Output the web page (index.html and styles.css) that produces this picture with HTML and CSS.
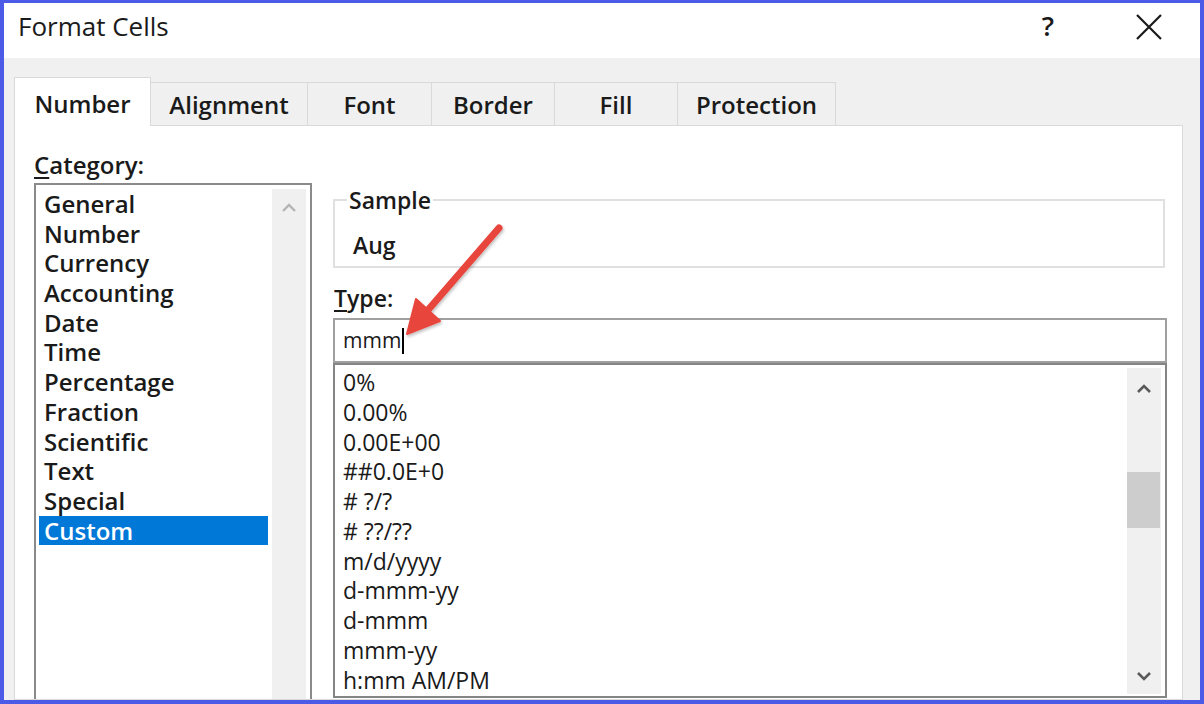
FILE: index.html
```html
<!DOCTYPE html>
<html>
<head>
<meta charset="utf-8">
<title>Format Cells</title>
<link rel="stylesheet" href="styles.css">
</head>
<body>
<div class="window">
  <div class="titlebar">
    <div class="title">Format Cells</div>
    <div class="tb-buttons">
      <div class="tb-help">?</div>
      <div class="tb-close">
        <svg width="26" height="26" viewBox="0 0 26 26"><path d="M1 1 L25 25 M25 1 L1 25" stroke="#1a1a1a" stroke-width="2.2" fill="none"/></svg>
      </div>
    </div>
  </div>
  <div class="client">
    <div class="tabs">
      <div class="tab active w-number">Number</div>
      <div class="tab w-align">Alignment</div>
      <div class="tab w-font">Font</div>
      <div class="tab w-border">Border</div>
      <div class="tab w-fill">Fill</div>
      <div class="tab w-prot">Protection</div>
      <div class="tab-fill"></div>
    </div>
    <div class="panel">
      <div class="col-left">
        <div class="label cat-label"><u>C</u>ategory:</div>
        <div class="listbox cat">
          <ul class="items cat-items">
            <li>General</li>
            <li>Number</li>
            <li>Currency</li>
            <li>Accounting</li>
            <li>Date</li>
            <li>Time</li>
            <li>Percentage</li>
            <li>Fraction</li>
            <li>Scientific</li>
            <li>Text</li>
            <li>Special</li>
            <li class="selected">Custom</li>
          </ul>
          <div class="vscroll cat-scroll">
            <svg class="chev" width="16" height="10" viewBox="0 0 16 10"><path d="M2 8 L8 2 L14 8" stroke="#b4b4b4" stroke-width="2.4" fill="none"/></svg>
          </div>
        </div>
      </div>
      <div class="col-right">
        <fieldset class="sample">
          <legend>Sample</legend>
          <div class="sample-value">Aug</div>
        </fieldset>
        <div class="label type-label"><u>T</u>ype:</div>
        <div class="type-input">mmm<span class="caret"></span></div>
        <div class="listbox fmt">
          <ul class="items fmt-items">
            <li>0%</li>
            <li>0.00%</li>
            <li>0.00E+00</li>
            <li>##0.0E+0</li>
            <li># ?/?</li>
            <li># ??/??</li>
            <li>m/d/yyyy</li>
            <li>d-mmm-yy</li>
            <li>d-mmm</li>
            <li>mmm-yy</li>
            <li>h:mm AM/PM</li>
          </ul>
          <div class="vscroll fmt-scroll">
            <svg class="chev" width="16" height="10" viewBox="0 0 16 10"><path d="M2 8 L8 2 L14 8" stroke="#5a5a5a" stroke-width="2.6" fill="none"/></svg>
            <div class="track">
              <div class="thumb"></div>
            </div>
            <svg class="chev" width="16" height="10" viewBox="0 0 16 10"><path d="M2 2 L8 8 L14 2" stroke="#5a5a5a" stroke-width="2.6" fill="none"/></svg>
          </div>
        </div>
      </div>
    </div>
  </div>
</div>
<svg class="arrow" width="1204" height="704" viewBox="0 0 1204 704">
  <defs>
    <filter id="sh" x="-20%" y="-20%" width="140%" height="140%">
      <feDropShadow dx="1" dy="2" stdDeviation="1.5" flood-color="#000" flood-opacity="0.25"/>
    </filter>
  </defs>
  <g filter="url(#sh)">
    <line x1="499" y1="228" x2="428" y2="310" stroke="#e8453d" stroke-width="7" stroke-linecap="round"/>
    <polygon points="407,334 440,321 416,299" fill="#e8453d" stroke="#e8453d" stroke-width="2" stroke-linejoin="round"/>
  </g>
</svg>
</body>
</html>
```
FILE: styles.css
```css
* { box-sizing: border-box; }
html, body { margin: 0; padding: 0; }
body {
  width: 1204px;
  height: 704px;
  overflow: hidden;
  font-family: "Open Sans", "Noto Sans", sans-serif;
  color: #1a1a1a;
  background: #f0f0f0;
}
.window {
  width: 1204px;
  height: 704px;
  border: 3px solid #4b5be8;
  border-left-width: 4px;
  border-right-width: 4px;
  border-bottom-width: 4px;
  display: flex;
  flex-direction: column;
  overflow: hidden;
  background: #f0f0f0;
}
.titlebar {
  height: 55px;
  flex: none;
  background: #ffffff;
  display: flex;
  justify-content: space-between;
  align-items: flex-start;
}
.title {
  font-size: 26px;
  line-height: 46px;
  padding-left: 14px;
}
.tb-buttons {
  display: flex;
  gap: 41px;
  margin-right: 21px;
}
.tb-help {
  width: 60px;
  text-align: center;
  font-size: 27px;
  font-weight: 600;
  line-height: 46px;
  margin-left: -2px;
}
.tb-close {
  width: 60px;
  height: 46px;
  display: flex;
  align-items: center;
  justify-content: center;
  padding-top: 2px;
}
.client {
  flex: 1;
  display: flex;
  flex-direction: column;
  padding-top: 19px;
  padding-left: 10px;
  min-height: 0;
}
.tabs {
  display: flex;
  align-items: flex-end;
  width: 1169px;
  height: 49px;
  flex: none;
}
.tab {
  height: 44px;
  background: #f0f0f0;
  border-top: 1px solid #d9d9d9;
  border-right: 1px solid #d9d9d9;
  border-bottom: 1px solid #d9d9d9;
  font-size: 24px;
  font-weight: 600;
  line-height: 44px;
  text-align: center;
}
.tab.active {
  height: 49px;
  background: #ffffff;
  border-left: 1px solid #d9d9d9;
  border-bottom: none;
  line-height: 52px;
}
.w-number { width: 137px; }
.w-align { width: 157px; }
.w-font { width: 124px; }
.w-border { width: 123px; }
.w-fill { width: 123px; }
.w-prot { width: 158px; }
.tab-fill {
  flex: 1;
  height: 1px;
  border-bottom: 1px solid #d9d9d9;
  border-right: 1px solid #d9d9d9;
}
.panel {
  flex: 1;
  width: 1169px;
  background: #ffffff;
  border: 1px solid #d9d9d9;
  border-top: none;
  display: grid;
  grid-template-columns: 278px 834px;
  column-gap: 21px;
  padding-left: 19px;
  align-items: start;
  min-height: 0;
  overflow: hidden;
}
.label {
  font-size: 23px;
  font-weight: 600;
  line-height: 30px;
}
.label u { text-decoration-thickness: 2px; text-underline-offset: 3px; }
.col-left { padding-top: 24px; }
.cat-label { margin-bottom: 3px; font-size: 24px; }
.listbox {
  display: flex;
  background: #ffffff;
}
.items {
  list-style: none;
  margin: 0;
  flex: 1;
}
.cat {
  height: 560px;
  border: 2px solid #8a8a8a;
}
.cat-items {
  padding: 4px 0 0 3px;
  font-size: 24px;
  font-weight: 600;
  line-height: 29.7px;
}
.cat-items li {
  padding-left: 5px;
  margin-right: 4px;
  height: 29.7px;
}
.cat-items li.selected {
  background: #0078d7;
  color: #ffffff;
}
.vscroll {
  width: 34px;
  background: #f0f0f0;
  display: flex;
  flex-direction: column;
  align-items: center;
}
.cat-scroll {
  margin: 4px 4px 0 0;
  padding-top: 14px;
}
.col-right { padding-top: 59px; }
.sample {
  margin: 0 2px 0 0;
  border: 2px solid #e0e0e0;
  padding: 15px 0 6px 18px;
  min-width: 0;
}
.sample legend {
  font-size: 23px;
  font-weight: 600;
  line-height: 30px;
  padding: 0 2px;
  margin-left: -6px;
}
.sample-value {
  font-size: 23px;
  font-weight: 600;
  line-height: 30px;
}
.type-label { margin-top: 15px; padding-left: 1px; }
.type-input {
  margin-top: 5px;
  height: 45px;
  border: 2px solid #a0a0a0;
  padding-left: 8px;
  font-size: 21px;
  font-weight: 500;
  line-height: 41px;
  display: flex;
  align-items: center;
}
.caret {
  display: inline-block;
  width: 2px;
  height: 26px;
  background: #000;
  margin-left: 1px;
}
.fmt {
  height: 335px;
  border: 2px solid #858585;
}
.fmt-items {
  padding: 3px 0 0 8px;
  font-size: 23px;
  font-weight: 500;
  line-height: 29.75px;
}
.fmt-scroll {
  margin: 3px 4px 2px 0;
  padding: 16px 0 13px;
}
.track {
  flex: 1;
  width: 100%;
  padding-top: 78px;
}
.thumb {
  width: 33px;
  height: 56px;
  background: #cdcdcd;
}
.arrow {
  position: absolute;
  left: 0;
  top: 0;
  pointer-events: none;
}
```
